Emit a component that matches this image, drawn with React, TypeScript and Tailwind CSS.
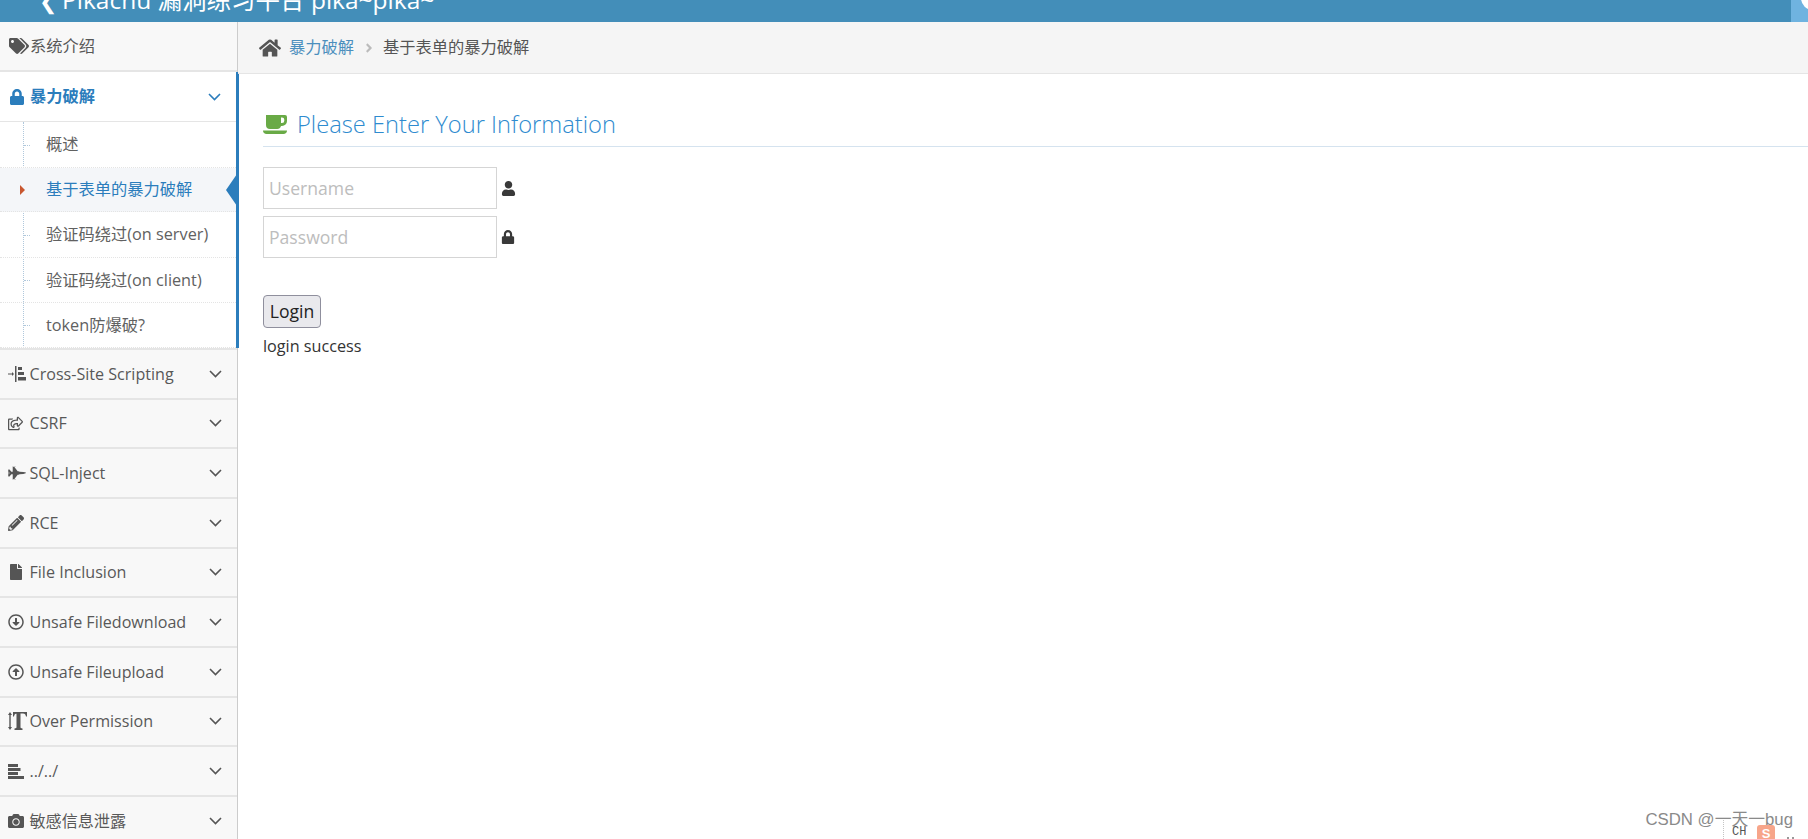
import React from "react";
import {
  FaTags, FaLock, FaHome, FaUser, FaFighterJet, FaPencilAlt, FaFile,
  FaRegArrowAltCircleDown, FaRegArrowAltCircleUp, FaCamera, FaRegShareSquare,
  FaAngleRight,
} from "react-icons/fa";

const Chevron = ({ className = "" }: { className?: string }) => (
  <svg width="13" height="8" viewBox="0 0 13 8" fill="none" className={className}>
    <path d="M1 1l5.5 5.5L12 1" stroke="currentColor" strokeWidth="1.6" />
  </svg>
);

const Indent = () => (
  <svg width="18" height="16" viewBox="0 0 18 16" fill="#555">
    <path d="M0 7.5h4V6l2 2-2 2V8.5H0z" />
    <rect x="7" y="0" width="1.5" height="16" />
    <rect x="10" y="1" width="4" height="3" />
    <rect x="10" y="6" width="6" height="3" />
    <rect x="10" y="11" width="8" height="3.5" />
  </svg>
);

const TextHeight = () => (
  <svg width="19" height="18" viewBox="0 0 19 18" fill="#555">
    <path d="M2 0l2 3H2.7v12H4l-2 3-2-3h1.3V3H0z" />
    <path d="M5 0h14v4.5h-1C17.6 2.500 17 1.500 15 1.500h-2.500V15c0 1 .5 1.400 2 1.500V18h-8v-1.500c1.500-.1 2-.5 2-1.500V1.500H9C7 1.500 6.400 2.500 6 4.500H5z" />
  </svg>
);

const Bars = () => (
  <svg width="16" height="15" viewBox="0 0 16 15" fill="#555">
    <rect x="0" y="0" width="10" height="3" />
    <rect x="0" y="4" width="12.500" height="3" />
    <rect x="0" y="8" width="10" height="3" />
    <rect x="0" y="12" width="16" height="3" />
  </svg>
);

const Coffee = () => (
  <svg width="24" height="19" viewBox="0 0 24 19" fill="#69aa46">
    <path
      fillRule="evenodd"
      d="M3 0h19a2 2 0 0 1 2 2v4a5 5 0 0 1-5 5h-1a4 4 0 0 1-4 3H7a4 4 0 0 1-4-4zM18 2.500V8h1a2.300 2.300 0 0 0 2.300-2.300V4.800A2.300 2.300 0 0 0 19 2.500z"
    />
    <path d="M0 15.500h24c0 2-1.500 3.500-3.500 3.500h-17C1.500 19 0 17.500 0 15.500z" />
  </svg>
);

const rows: { icon: React.ReactNode; label: string }[] = [
  { icon: <Indent />, label: "Cross-Site Scripting" },
  { icon: <FaRegShareSquare size={15} />, label: "CSRF" },
  { icon: <FaFighterJet size={18} />, label: "SQL-Inject" },
  { icon: <FaPencilAlt size={16} />, label: "RCE" },
  { icon: <FaFile size={16} />, label: "File Inclusion" },
  { icon: <FaRegArrowAltCircleDown size={16} />, label: "Unsafe Filedownload" },
  { icon: <FaRegArrowAltCircleUp size={16} />, label: "Unsafe Fileupload" },
  { icon: <TextHeight />, label: "Over Permission" },
  { icon: <Bars />, label: "../../" },
  { icon: <FaCamera size={16} />, label: "敏感信息泄露" },
];

const subs = [
  { label: "概述", h: "h-[46px]" },
  { label: "基于表单的暴力破解", h: "h-[44px]", active: true },
  { label: "验证码绕过(on server)", h: "h-[46px]" },
  { label: "验证码绕过(on client)", h: "h-[45px]" },
  { label: "token防爆破?", h: "h-[45px]" },
];

const font = "font-['Open_Sans','Noto_Sans_CJK_SC',sans-serif]";

export default function App() {
  return (
    <div className={`relative h-[839px] w-[1808px] overflow-hidden bg-white ${font} text-[16px] text-[#333]`}>
      <header className="flex h-[22px] overflow-hidden bg-[#438eb9] text-white">
        <div className="-mt-[17px] flex h-[33px] flex-1 items-center gap-[5px] pl-[39px] text-[24.5px] leading-[33px]">
          <span className="text-[22px] leading-none">❮</span>
          <span>Pikachu 漏洞练习平台 pika~pika~</span>
        </div>
        <div className="relative w-[17px] overflow-hidden bg-[#6fb3e0]">
          <div className="absolute -top-[14px] left-[10px] h-[24px] w-[24px] rounded-full bg-white" />
        </div>
      </header>

      <div className="flex h-[817px]">
        <aside className="w-[238px] shrink-0 border-r border-[#cccccc] bg-[#f8f8f8] text-[#585858]">
          <div className="flex h-[50px] items-center gap-[1px] border-b-2 border-[#e5e5e5] pl-[9px] text-[16.25px]">
            <FaTags size={20} color="#555" />
            <span>系统介绍</span>
          </div>
          <div className="-mr-[2px] border-r-[3px] border-[#2b7dbc] bg-white">
            <div className="flex h-[50px] items-center border-b border-[#e5e5e5] pl-[9px] pr-[15px] font-bold text-[#2b7dbc]">
              <FaLock size={16} />
              <span className="ml-[5px] flex-1 text-[16.25px]">暴力破解</span>
              <Chevron />
            </div>
            <ul className="relative">
              <li className="absolute bottom-0 left-[23px] top-0 border-l border-dotted border-[#b0c8dc]" />
              {subs.map((s) => (
                <li
                  key={s.label}
                  className={`relative flex items-center border-b border-dotted border-[#e4e4e4] pl-[46px] text-[16.25px] ${s.h} ${
                    s.active ? "bg-[#f4f6f9] text-[#2b7dbc]" : "text-[#616161]"
                  }`}
                >
                  {!s.active && <span className="absolute left-[24px] top-1/2 w-[6px] border-t border-dotted border-[#b0c8dc]" />}
                  {s.active && (
                    <>
                      <span className="absolute left-[20px] top-1/2 -mt-[5px] h-0 w-0 border-y-[5px] border-l-[5px] border-y-transparent border-l-[#c8572f]" />
                      <span className="absolute -right-[1px] top-1/2 -mt-[16px] h-0 w-0 border-y-[16px] border-r-[11px] border-y-transparent border-r-[#2b7dbc]" />
                    </>
                  )}
                  {s.label}
                </li>
              ))}
            </ul>
          </div>
          {rows.map((r) => (
            <div key={r.label} className="flex h-[49.67px] items-center border-t-2 border-[#e5e5e5] pl-[8px] pr-[15px]">
              <span className="flex w-[21.500px] shrink-0 items-center text-[#555]">{r.icon}</span>
              <span className="flex-1 text-[16.1px]">{r.label}</span>
              <Chevron className="text-[#555]" />
            </div>
          ))}
        </aside>

        <main className="min-w-0 flex-1">
          <div className="flex h-[52px] items-center border-b border-[#e5e5e5] bg-[#f5f5f5] pl-[21px] text-[16.25px]">
            <FaHome size={22} color="#555" />
            <span className="ml-[8px] text-[#4c8fbd]">暴力破解</span>
            <FaAngleRight size={14} className="ml-[8px] mr-[7px] text-[#bbbbbb]" />
            <span className="text-[#555]">基于表单的暴力破解</span>
          </div>

          <section className="pl-[25px] pt-[32px]">
            <h1 className="flex h-[41px] items-center gap-[10px] border-b border-[#d5e3ef] pb-[3px] text-[23.7px] font-light text-[#2e8bcf]">
              <Coffee />
              <span>Please Enter Your Information</span>
            </h1>
            <div className="mt-[20px] flex items-center gap-[4px]">
              <input
                placeholder="Username"
                className="h-[42px] w-[234px] border border-[#d5d5d5] px-[5px] text-[17.6px] outline-none placeholder:text-[#bdbdbd]"
              />
              <FaUser size={15} color="#393939" />
            </div>
            <div className="mt-[7px] flex items-center gap-[4px]">
              <input
                placeholder="Password"
                className="h-[42px] w-[234px] border border-[#d5d5d5] px-[5px] text-[17.6px] outline-none placeholder:text-[#bdbdbd]"
              />
              <FaLock size={14} color="#393939" />
            </div>
            <button className="mt-[37px] block h-[33px] w-[58px] rounded-[4px] border border-[#8f8f9d] bg-[#e9e9ed] pt-[1px] text-[17.6px] leading-none text-[#222]">
              Login
            </button>
            <p className="mt-[7px] text-[16.2px] leading-[22px] text-[#333]">login success</p>
          </section>
        </main>
      </div>

      <div className="absolute bottom-[9px] right-[15px] font-['Liberation_Sans','Noto_Sans_CJK_SC',sans-serif] text-[16.8px] leading-[20px] text-[#8a8a8a]">
        CSDN @一天一bug
      </div>
      <div className="absolute bottom-0 left-[1723px] h-[19px] border-l border-dotted border-[#c4c4c4]" />
      <div className="absolute bottom-0 left-[1732px] h-[14px] overflow-hidden font-['Liberation_Mono',monospace] text-[12px] leading-[14px] text-[#555]">CH</div>
      <div className="absolute -bottom-[2px] left-[1757px] flex h-[16px] w-[18px] items-center justify-center rounded-[3px] bg-[#f7a58a] font-['Liberation_Sans',sans-serif] text-[13px] font-bold leading-none text-white">S</div>
      <div className="absolute bottom-0 left-[1787px] h-[2px] w-[7px] border-l-2 border-r-2 border-[#999]" />
    </div>
  );
}
